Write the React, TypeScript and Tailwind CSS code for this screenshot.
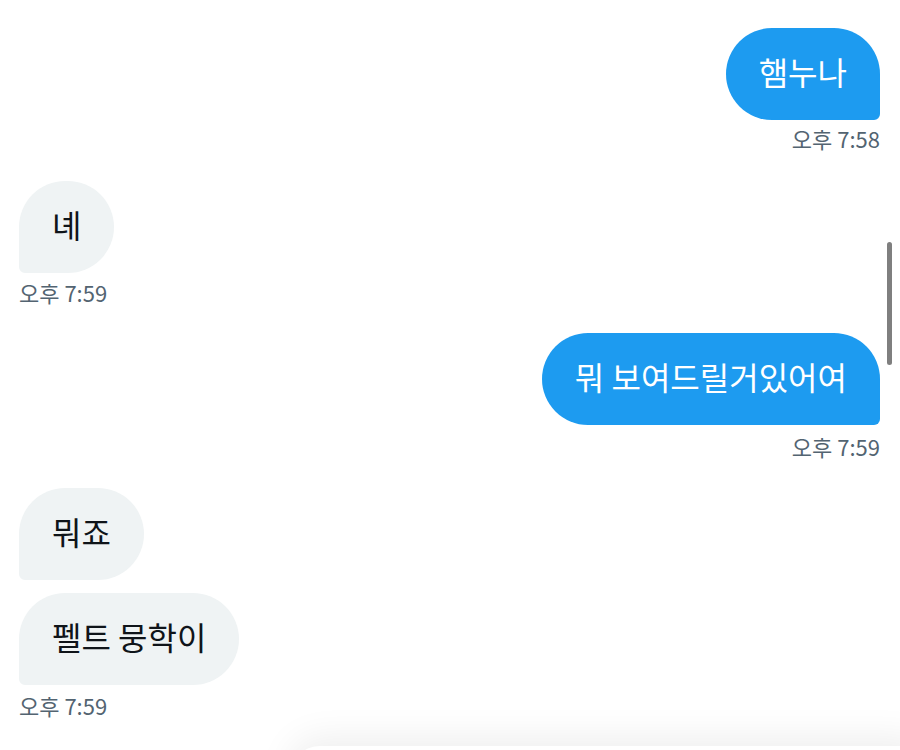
import React from "react";

type Msg = {
  id: number;
  text: string;
  mine: boolean;
  time?: string;
  space: string; // margin above the bubble
  timeSpace?: string; // margin between bubble and timestamp
};

const messages: Msg[] = [
  { id: 1, text: "햄누나", mine: true, time: "오후 7:58", space: "mt-0", timeSpace: "mt-[4px]" },
  { id: 2, text: "녜", mine: false, time: "오후 7:59", space: "mt-[29px]", timeSpace: "mt-[5px]" },
  { id: 3, text: "뭐 보여드릴거있어여", mine: true, time: "오후 7:59", space: "mt-[27px]", timeSpace: "mt-[7px]" },
  { id: 4, text: "뭐죠", mine: false, space: "mt-[28px]" },
  { id: 5, text: "펠트 뭉학이", mine: false, time: "오후 7:59", space: "mt-[13px]", timeSpace: "mt-[6px]" },
];

const font = { fontFamily: '"Noto Sans CJK KR", "Noto Sans", sans-serif' };

function Bubble({ msg }: { msg: Msg }) {
  return (
    <div className={`${msg.space} flex flex-col`}>
      <div className={msg.mine ? "flex justify-end" : "flex justify-start"}>
        <div
          className={
            msg.mine
              ? "rounded-[46px] rounded-br-[6px] bg-[#1d9bf0] px-[33px] pt-[23px] pb-[29px] text-[32px] leading-[40px] text-white whitespace-nowrap"
              : "rounded-[46px] rounded-bl-[6px] bg-[#eff3f4] px-[33px] pt-[23px] pb-[29px] text-[32px] leading-[40px] text-[#0f1419] whitespace-nowrap"
          }
        >
          {msg.text}
        </div>
      </div>
      {msg.time && (
        <div
          className={`${msg.timeSpace} text-[22px] leading-[28px] text-[#536471] ${msg.mine ? "text-right" : "text-left"}`}
        >
          {msg.time}
        </div>
      )}
    </div>
  );
}

export default function App() {
  return (
    <div className="relative h-[750px] w-[900px] overflow-hidden bg-white" style={font}>
      <div className="flex flex-col pl-[19px] pr-[20px] pt-[28px]">
        {messages.map((m) => (
          <Bubble key={m.id} msg={m} />
        ))}
      </div>

      {/* overlay scrollbar */}
      <div className="absolute left-[887px] top-[242px] h-[123px] w-[5px] rounded-full bg-[#7f7f7f]" />

      {/* composer peeking in at the bottom */}
      <div className="absolute left-[290px] top-[746px] h-[80px] w-[640px] rounded-[30px] bg-white shadow-[0_-8px_36px_rgba(0,0,0,0.07)]" />
    </div>
  );
}
